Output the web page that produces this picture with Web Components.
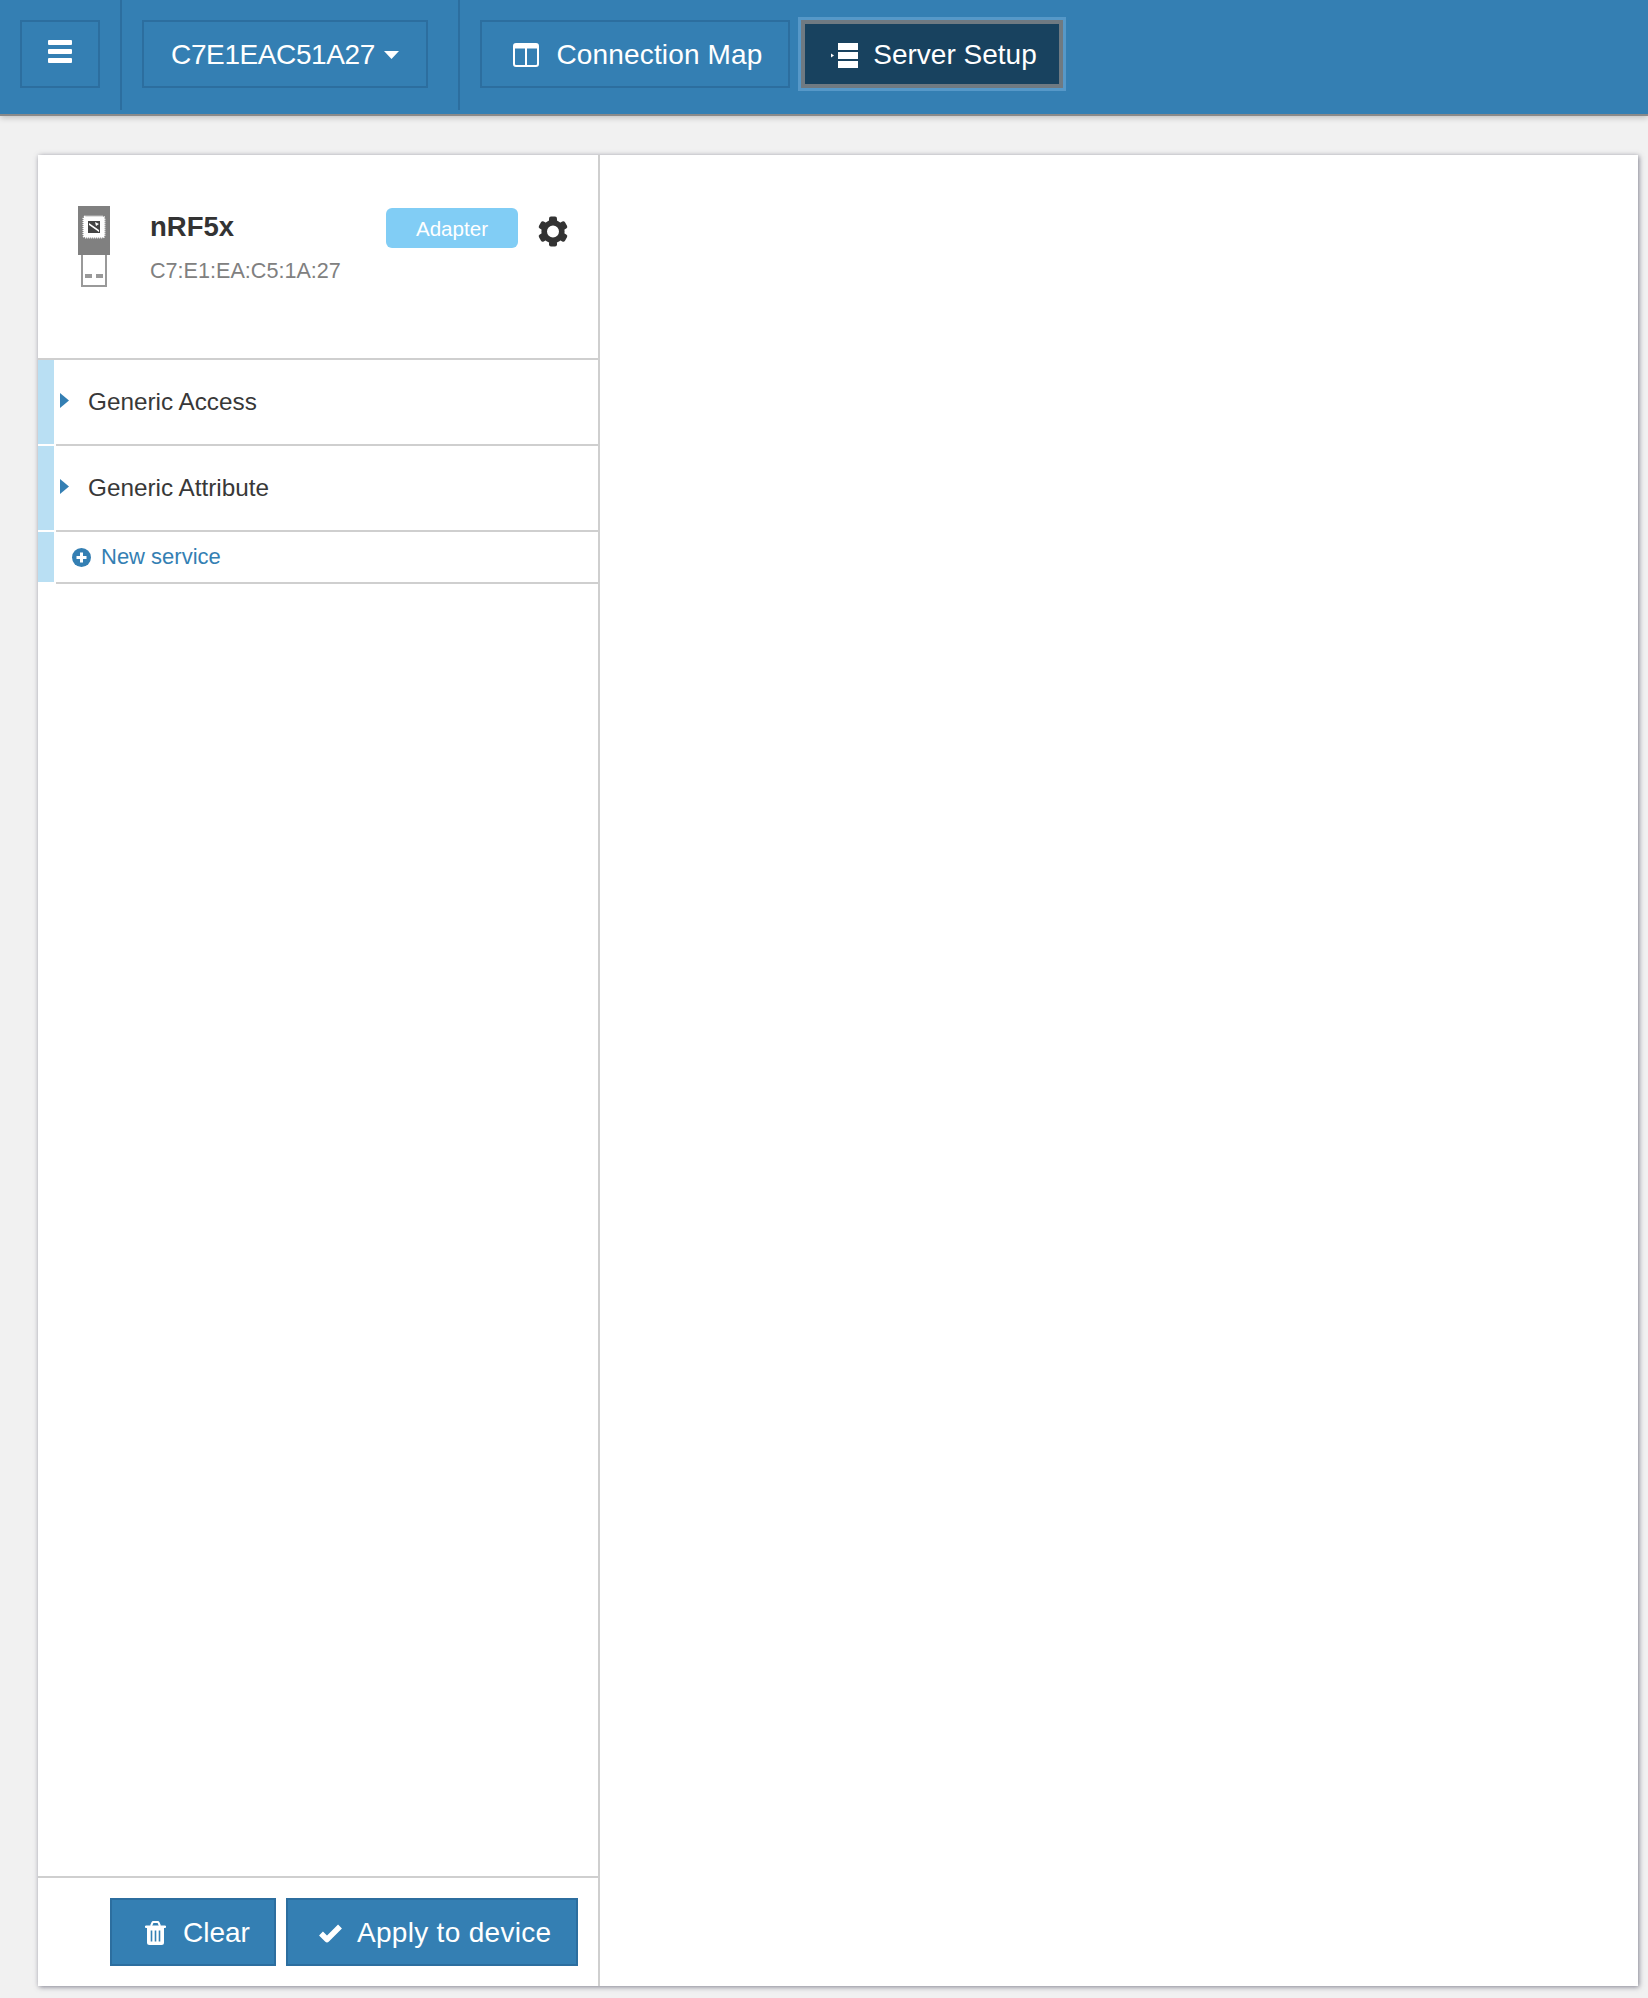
<!DOCTYPE html>
<html>
<head>
<meta charset="utf-8">
<title>Server Setup</title>
<style>
    html, body { margin: 0; padding: 0; height: 100%; background: #f1f1f1; }
</style>
</head>
<body>
<app-root>
    <app-navbar slot="nav">
        <nav-button slot="menu" width="80">
            <svg slot="icon" style="margin-bottom:7px" width="24" height="23" viewBox="0 0 24 23" fill="#fff"><rect y="0" width="24" height="5" rx="1"/><rect y="9" width="24" height="5" rx="1"/><rect y="18" width="24" height="5" rx="1"/></svg>
        </nav-button>
        <nav-button slot="adapter" width="286" style="--ls:-.4px">
            C7E1EAC51A27
            <svg slot="after" width="15" height="8" viewBox="0 0 15 8" fill="#fff"><path d="M0 0h15L7.500 8z"/></svg>
        </nav-button>
        <nav-button slot="views" width="310" style="--ls:.15px;padding-left:6px">
            <svg slot="icon" width="26" height="24" viewBox="0 0 26 24" fill="none" stroke="#fff" stroke-width="2"><rect x="1" y="1" width="24" height="22" rx="2"/><path d="M13 4v19"/><path d="M1 3.500h24" stroke-width="4"/></svg>
            Connection Map
        </nav-button>
        <nav-button slot="views" width="262" active>
            <svg slot="icon" width="27" height="25" viewBox="0 0 27 25" fill="#fff"><rect x="7" y="0" width="20" height="7"/><rect x="7" y="9" width="20" height="7"/><rect x="7" y="18" width="20" height="7"/><path d="M0 10.500l3 2-3 2z"/></svg>
            Server Setup
        </nav-button>
    </app-navbar>
    <server-card>
        <device-header slot="header" name="nRF5x" address="C7:E1:EA:C5:1A:27" role="Adapter"></device-header>
        <service-row slot="list">Generic Access</service-row>
        <service-row slot="list">Generic Attribute</service-row>
        <new-service slot="list">New service</new-service>
        <footer-button slot="footer" style="width:166px;padding-left:33px;gap:17px">
            <svg slot="icon" width="21" height="24" viewBox="0 0 21 24"><path fill="#fff" d="M1 4.500h19a1 1 0 0 1 0 2.500h-1v14.500a2.500 2.500 0 0 1-2.500 2.500h-12A2.500 2.500 0 0 1 2 21.500V7H1a1 1 0 0 1 0-2.500z"/><path fill="none" stroke="#fff" stroke-width="2" d="M6 5l1.500-3.500a1 1 0 0 1 1-.5h4a1 1 0 0 1 1 .5L15 5"/><path stroke="#347fb3" stroke-width="1.600" d="M6.500 9.500V20.500M10.500 9.500V20.500M14.500 9.500V20.500"/></svg>
            Clear
        </footer-button>
        <footer-button slot="footer" style="--ls:.3px;width:292px;padding-left:30px;gap:14px">
            <svg slot="icon" width="25" height="20" viewBox="0 0 25 20" fill="none" stroke="#fff" stroke-width="5.500" stroke-linejoin="round"><path d="M3 10.500l6 6L22 3.500"/></svg>
            Apply to device
        </footer-button>
    </server-card>
</app-root>

<script>
    const FONT = '"Liberation Sans", Arial, sans-serif';

    class AppRoot extends HTMLElement {
        constructor() {
            super();
            this.attachShadow({mode: 'open'});
            this.shadowRoot.innerHTML = `
                <style>
                    :host {
                        display: flex;
                        flex-direction: column;
                        height: 1998px;
                        background: #f1f1f1;
                        font-family: ${FONT};
                    }
                    main {
                        flex: 1;
                        min-height: 0;
                        display: flex;
                        padding: 39px 10px 12px 38px;
                    }
                </style>
                <slot name="nav"></slot>
                <main><slot></slot></main>
            `;
        }
    }

    class AppNavbar extends HTMLElement {
        constructor() {
            super();
            this.attachShadow({mode: 'open'});
            this.shadowRoot.innerHTML = `
                <style>
                    :host {
                        display: flex;
                        height: 114px;
                        background: #347fb3;
                        border-bottom: 2px solid #8a8a8a;
                        box-shadow: 0 2px 6px rgba(0, 0, 0, .2);
                        position: relative;
                    }
                    section {
                        height: 110px;
                        box-sizing: border-box;
                        padding: 20px 0 0 20px;
                        display: flex;
                        gap: 11px;
                    }
                    .menu { width: 122px; border-right: 2px solid #2c6e9f; }
                    .adapter { width: 338px; border-right: 2px solid #2c6e9f; }
                </style>
                <section class="menu"><slot name="menu"></slot></section>
                <section class="adapter"><slot name="adapter"></slot></section>
                <section><slot name="views"></slot></section>
            `;
        }
    }

    class NavButton extends HTMLElement {
        constructor() {
            super();
            this.attachShadow({mode: 'open'});
            this.shadowRoot.innerHTML = `
                <style>
                    :host {
                        display: flex;
                        align-items: center;
                        justify-content: center;
                        gap: 17px;
                        box-sizing: border-box;
                        height: 68px;
                        padding-top: 2px;
                        border: 2px solid #2c6e9f;
                        color: #fff;
                        font-size: 28px;
                        letter-spacing: var(--ls, 0);
                        white-space: nowrap;
                    }
                    :host([active]) {
                        background: #18425f;
                        border: 4px solid #6f7a82;
                        padding-left: 4px;
                        gap: 15px;
                        box-shadow: 0 0 0 3px rgba(120, 178, 222, .5);
                    }
                    ::slotted(svg) { display: block; flex: none; }
                    ::slotted(svg[slot="after"]) { margin-left: -8px; }
                </style>
                <slot name="icon"></slot>
                <slot></slot>
                <slot name="after"></slot>
            `;
            this.style.width = this.getAttribute('width') + 'px';
        }
    }

    class ServerCard extends HTMLElement {
        constructor() {
            super();
            this.attachShadow({mode: 'open'});
            this.shadowRoot.innerHTML = `
                <style>
                    :host {
                        flex: 1;
                        display: flex;
                        background: #fff;
                        box-shadow: 1px 1px 5px rgba(80, 80, 100, .7);
                    }
                    aside {
                        width: 562px;
                        box-sizing: border-box;
                        border-right: 2px solid #cfcfcf;
                        display: flex;
                        flex-direction: column;
                    }
                    .list { flex: 1; }
                    footer {
                        height: 110px;
                        box-sizing: border-box;
                        border-top: 2px solid #cfcfcf;
                        padding: 20px 20px 0 0;
                        display: flex;
                        justify-content: flex-end;
                        gap: 10px;
                    }
                </style>
                <aside>
                    <slot name="header"></slot>
                    <div class="list"><slot name="list"></slot></div>
                    <footer><slot name="footer"></slot></footer>
                </aside>
            `;
        }
    }

    class DeviceHeader extends HTMLElement {
        constructor() {
            super();
            this.attachShadow({mode: 'open'});
            this.shadowRoot.innerHTML = `
                <style>
                    :host {
                        display: flex;
                        box-sizing: border-box;
                        height: 205px;
                        padding: 51px 0 0 40px;
                        border-bottom: 2px solid #cfcfcf;
                    }
                    .usb { display: block; flex: none; }
                    .info { width: 236px; margin-left: 40px; }
                    .name {
                        font-size: 27.500px;
                        font-weight: bold;
                        line-height: 32px;
                        margin-top: 5px;
                        color: #333;
                    }
                    .addr {
                        font-size: 21.600px;
                        line-height: 26px;
                        margin-top: 15px;
                        color: #808080;
                    }
                    .badge {
                        width: 132px;
                        height: 40px;
                        box-sizing: border-box;
                        padding-top: 2px;
                        margin-top: 2px;
                        border-radius: 6px;
                        background: #81cdf5;
                        color: #fff;
                        font-size: 20.600px;
                        display: flex;
                        align-items: center;
                        justify-content: center;
                    }
                    .gear { display: block; margin: 10px 0 0 20px; }
                </style>
                <svg class="usb" width="32" height="81" viewBox="0 0 32 81">
                    <rect width="32" height="49" fill="#808080"/>
                    <rect x="5.500" y="10.500" width="21" height="21" rx="2" fill="#fff" stroke="#fff" stroke-width="2" stroke-dasharray="1 1"/>
                    <rect x="10" y="15" width="12" height="12" fill="#444"/>
                    <path d="M11 17l10 7v2l-10-7zM17 16l4 2-3 2z" fill="#fff"/>
                    <path d="M4 49v31h24V49" fill="#fff" stroke="#999" stroke-width="2"/>
                    <rect x="7" y="68" width="7" height="4" fill="#999"/>
                    <rect x="18" y="68" width="7" height="4" fill="#999"/>
                </svg>
                <div class="info">
                    <div class="name"></div>
                    <div class="addr"></div>
                </div>
                <div class="badge"></div>
                <svg class="gear" width="30" height="31" viewBox="0 0 30 31" fill="#333">
                    <circle cx="15" cy="15.500" r="8.800" fill="none" stroke="#333" stroke-width="5.600"/>
                    <rect x="11" y=".5" width="8" height="6" rx="2"/>
                    <rect x="11" y=".5" width="8" height="6" rx="2" transform="rotate(60 15 15.500)"/>
                    <rect x="11" y=".5" width="8" height="6" rx="2" transform="rotate(120 15 15.500)"/>
                    <rect x="11" y=".5" width="8" height="6" rx="2" transform="rotate(180 15 15.500)"/>
                    <rect x="11" y=".5" width="8" height="6" rx="2" transform="rotate(240 15 15.500)"/>
                    <rect x="11" y=".5" width="8" height="6" rx="2" transform="rotate(300 15 15.500)"/>
                </svg>
            `;
            this.shadowRoot.querySelector('.name').textContent = this.getAttribute('name');
            this.shadowRoot.querySelector('.addr').textContent = this.getAttribute('address');
            this.shadowRoot.querySelector('.badge').textContent = this.getAttribute('role');
        }
    }

    class ServiceRow extends HTMLElement {
        constructor() {
            super();
            this.attachShadow({mode: 'open'});
            this.shadowRoot.innerHTML = `
                <style>
                    :host {
                        display: flex;
                        height: 86px;
                        font-size: 24.300px;
                        color: #383838;
                    }
                    .strip { width: 16px; height: 84px; background: #b9dff3; flex: none; }
                    .body {
                        flex: 1;
                        margin-left: 2px;
                        border-bottom: 2px solid #cfcfcf;
                        display: flex;
                        align-items: center;
                        padding-left: 4px;
                    }
                    svg { display: block; margin: -4px 19px 0 0; }
                </style>
                <div class="strip"></div>
                <div class="body">
                    <svg width="9" height="15" viewBox="0 0 9 15" fill="#347fb3"><path d="M0 0l9 7.500L0 15z"/></svg>
                    <slot></slot>
                </div>
            `;
        }
    }

    class NewService extends HTMLElement {
        constructor() {
            super();
            this.attachShadow({mode: 'open'});
            this.shadowRoot.innerHTML = `
                <style>
                    :host {
                        display: flex;
                        height: 52px;
                        font-size: 22px;
                        color: #347fb3;
                    }
                    .strip { width: 16px; height: 50px; background: #b9dff3; flex: none; }
                    .body {
                        flex: 1;
                        margin-left: 2px;
                        border-bottom: 2px solid #cfcfcf;
                        display: flex;
                        align-items: center;
                        padding-left: 16px;
                        gap: 10px;
                    }
                    svg { display: block; }
                </style>
                <div class="strip"></div>
                <div class="body">
                    <svg width="19" height="19" viewBox="0 0 19 19"><circle cx="9.500" cy="9.500" r="9.500" fill="#347fb3"/><path d="M9.500 4.500v10M4.500 9.500h10" stroke="#fff" stroke-width="3"/></svg>
                    <slot></slot>
                </div>
            `;
        }
    }

    class FooterButton extends HTMLElement {
        constructor() {
            super();
            this.attachShadow({mode: 'open'});
            this.shadowRoot.innerHTML = `
                <style>
                    :host {
                        display: flex;
                        align-items: center;
                        box-sizing: border-box;
                        height: 68px;
                        padding-top: 2px;
                        background: #347fb3;
                        border: 2px solid #2c6e9f;
                        color: #fff;
                        font-size: 28px;
                        letter-spacing: var(--ls, 0);
                        white-space: nowrap;
                    }
                    ::slotted(svg) { display: block; flex: none; }
                </style>
                <slot name="icon"></slot>
                <slot></slot>
            `;
        }
    }

    customElements.define('app-root', AppRoot);
    customElements.define('app-navbar', AppNavbar);
    customElements.define('nav-button', NavButton);
    customElements.define('server-card', ServerCard);
    customElements.define('device-header', DeviceHeader);
    customElements.define('service-row', ServiceRow);
    customElements.define('new-service', NewService);
    customElements.define('footer-button', FooterButton);
</script>
</body>
</html>
